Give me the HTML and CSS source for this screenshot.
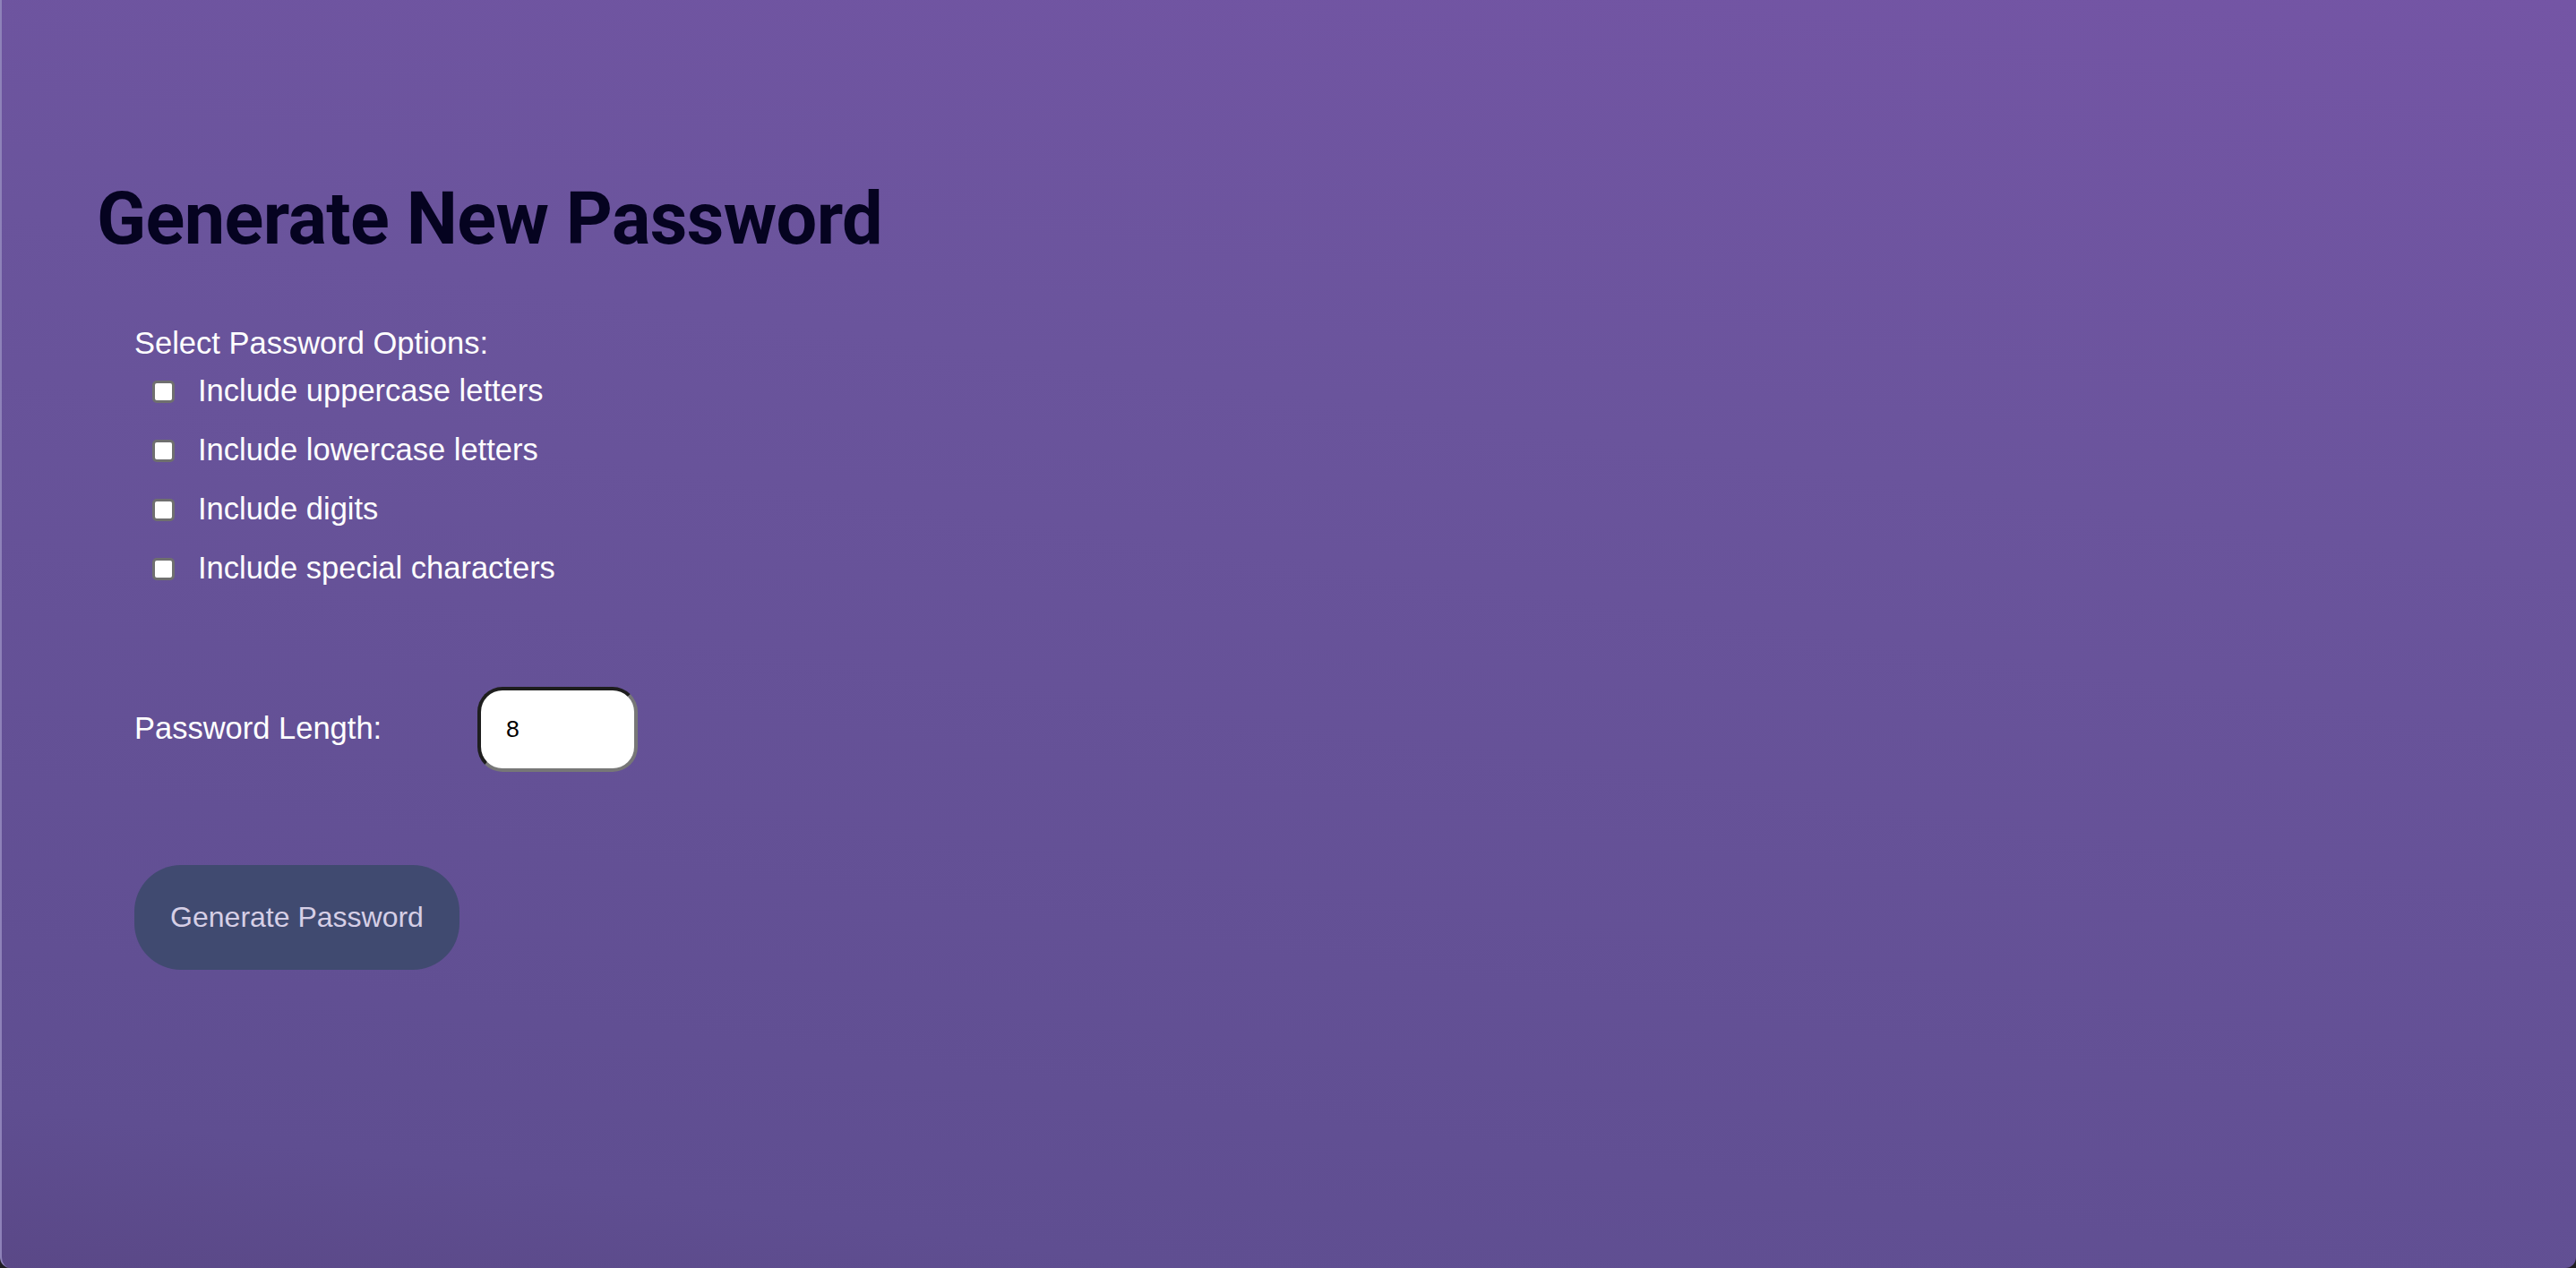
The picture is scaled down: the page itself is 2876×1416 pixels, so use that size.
FILE: index.html
```html
<!DOCTYPE html>
<html lang="en">
<head>
<meta charset="utf-8">
<title>Generate New Password</title>
<link rel="stylesheet" href="styles.css">
</head>
<body>
<main class="page">
  <h1 class="title">Generate New Password</h1>
  <form class="form">
    <div class="options">
      <p class="options-label">Select Password Options:</p>
      <label class="option"><input type="checkbox" class="check"><span>Include uppercase letters</span></label>
      <label class="option"><input type="checkbox" class="check"><span>Include lowercase letters</span></label>
      <label class="option"><input type="checkbox" class="check"><span>Include digits</span></label>
      <label class="option"><input type="checkbox" class="check"><span>Include special characters</span></label>
    </div>
    <div class="length-row">
      <label class="length-label" for="len">Password Length:</label>
      <input id="len" class="length-input" type="text" value="8">
    </div>
    <button type="button" class="generate">Generate Password</button>
  </form>
</main>
</body>
</html>
```

FILE: styles.css
```css
html, body {
  margin: 0;
  padding: 0;
  height: 100%;
  background: #1f1d24;
}

.page {
  box-sizing: border-box;
  height: 100vh;
  padding: 204px 0 0 106px;
  background: linear-gradient(188deg, #7455a5 0%, #6a549c 35%, #5f4e91 90%, #5a4887 100%);
  border-left: 2px solid #8e82b9;
  border-radius: 0 0 12px 12px;
  font-family: "Liberation Sans", Arial, sans-serif;
  color: #ffffff;
}

.title {
  margin: 0;
  font-family: Roboto, "Liberation Sans", sans-serif;
  font-weight: 700;
  font-size: 81px;
  line-height: 82px;
  color: #050320;
  letter-spacing: -0.6px;
}

.form {
  display: flex;
  flex-direction: column;
  align-items: flex-start;
  padding-left: 42px;
  margin-top: 77px;
}

.options {
  display: flex;
  flex-direction: column;
}

.options-label {
  margin: 0;
  font-size: 34.5px;
  line-height: 40px;
}

.option {
  display: flex;
  align-items: center;
  height: 66px;
  font-size: 34.5px;
  line-height: 40px;
}

.check {
  appearance: none;
  -webkit-appearance: none;
  box-sizing: border-box;
  width: 25px;
  height: 25px;
  margin: 2px 26px 0 20px;
  border: 3px solid #6f6f6f;
  border-radius: 5px;
  background: #ffffff;
}

.length-row {
  display: flex;
  align-items: baseline;
  margin-top: 100px;
}

.length-label {
  width: 383px;
  font-size: 34.5px;
  line-height: 40px;
  position: relative;
  top: 2px;
}

.length-input {
  box-sizing: border-box;
  width: 179px;
  height: 95px;
  padding: 0 0 0 28px;
  border: 4px solid;
  border-color: #1e1e1e #777777 #777777 #1e1e1e;
  border-radius: 28px;
  background: #ffffff;
  font-family: "Liberation Sans", Arial, sans-serif;
  font-size: 26.67px;
  color: #000000;
  outline: none;
}

.generate {
  margin-top: 104px;
  width: 363px;
  height: 117px;
  padding: 0;
  border: none;
  border-radius: 52px;
  background: #404a70;
  color: #d6cfe6;
  font-family: "Liberation Sans", Arial, sans-serif;
  font-size: 32px;
}
```
